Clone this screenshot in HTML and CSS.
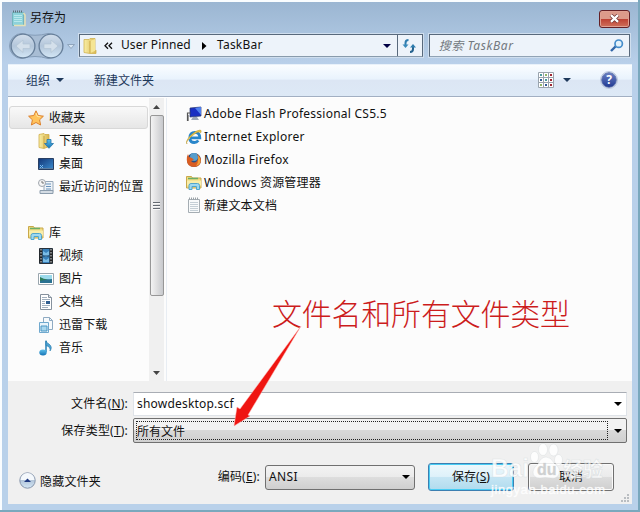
FILE: index.html
```html
<!DOCTYPE html>
<html lang="zh-CN">
<head>
<meta charset="utf-8">
<title>另存为</title>
<link rel="stylesheet" href="styles.css">
</head>
<body>
<svg width="0" height="0" class="defs">
  <defs>
    <linearGradient id="gold" x1="0" x2="1"><stop offset="0" stop-color="#f9eea4"/><stop offset="1" stop-color="#d8b650"/></linearGradient>
    <linearGradient id="orb" x1="0" x2="0" y1="0" y2="1"><stop offset="0" stop-color="#d3dfec"/><stop offset=".5" stop-color="#b3c6da"/><stop offset="1" stop-color="#d4e7f6"/></linearGradient>
    <linearGradient id="screen" x1="0" x2="1" y1="0" y2="1"><stop offset="0" stop-color="#123576"/><stop offset="1" stop-color="#3c8dd0"/></linearGradient>
    <linearGradient id="blue" x1="0" x2="0" y1="0" y2="1"><stop offset="0" stop-color="#5cc0ec"/><stop offset="1" stop-color="#1673b4"/></linearGradient>
    <symbol id="library" viewBox="0 0 16 16"><path d="M.5 1.500h5l1 1.500h8.500v10H.5z" fill="#f1dc82" stroke="#c9a94a"/><path d="M2 3.500h10" stroke="#6cae66" stroke-width="1.500"/><path d="M1 5.500h14v5H1z" fill="#f9eda9"/><path d="M3 14.500v-4q0-2 2-2h6.500q2 0 2 2v4h-3v-3h-4.500v3z" fill="#9ed8f0" stroke="#51a5cc"/></symbol>
    <symbol id="note" viewBox="0 0 14 17"><path d="M1.500 2.500h11v13h-11z" fill="#f8fafb" stroke="#a5adb3"/><path d="M3 5.500h8M3 7.500h8M3 9.500h8M3 11.500h8M3 13.500h8" stroke="#c5cfd6"/><path d="M2 1.500h10" stroke="#9aa1a6" stroke-width="2" stroke-dasharray="1 1"/></symbol>
  </defs>
</svg>
<main class="window">
  <header class="titlebar">
    <svg width="15" height="17" viewBox="0 0 15 17"><path d="M1.500 2.500h11v13h-11z" fill="#8dd2da" stroke="#74b4bd"/><path d="M12.500 3l1.500 2v10.500H3" fill="none" stroke="#e5e1b5" stroke-width="1.500"/><path d="M3 5.500h8M3 7.500h8M3 9.500h8M3 11.500h8" stroke="#b8e8ec"/><path d="M2 1.500h10" stroke="#5b7177" stroke-width="2" stroke-dasharray="1 1"/></svg>
    <h1>另存为</h1>
    <button class="close" aria-label="关闭"><svg width="11" height="9" viewBox="0 0 11 9"><path d="M2 1.200l7 6.600M9 1.200L2 7.800" stroke="#6c302e" stroke-width="3.800"/><path d="M2 1.200l7 6.600M9 1.200L2 7.800" stroke="#fff" stroke-width="2.300"/></svg></button>
  </header>
  <nav class="navbar">
    <svg class="history" width="67" height="28" viewBox="0 0 67 28"><path d="M13 1.500q13 3.500 26 0a12.500 12.500 0 0 1 0 25q-13-4-26 0a12.500 12.500 0 0 1 0-25z" fill="#a8bdd4" stroke="#859db8"/><circle cx="14" cy="14" r="11.900" fill="url(#orb)" stroke="#677f9a" stroke-width="1.300"/><circle cx="42" cy="14" r="11.900" fill="url(#orb)" stroke="#677f9a" stroke-width="1.300"/><path d="M7 14l7-6v4h7v4.500h-7v4z" fill="#d4e0eb" stroke="#b3c4d4" stroke-width=".7"/><path d="M49 14l-7-6v4h-7v4.500h7v4z" fill="#d4e0eb" stroke="#b3c4d4" stroke-width=".7"/><path d="M58.500 12.500h7l-3.500 4z" fill="#d6e5f3" stroke="#8fa5bd"/></svg>
    <div class="address">
      <svg width="14" height="18" viewBox="0 0 14 18"><path d="M1 2.500h5l1-1h5v11l1 1v3H7l-6-1z" fill="url(#gold)" stroke="#d1b252" stroke-width=".8"/><path d="M7 4l5-2v12l-5 2z" fill="#f5e594"/><path d="M7 4v12" stroke="#caa746"/></svg>
      <svg class="chev" width="9" height="8" viewBox="0 0 9 8"><path d="M4 .8L1 3.800l3 3M8 .8l-3 3 3 3" fill="none" stroke="#111" stroke-width="1.300"/></svg>
      <span class="crumb-one">User Pinned</span>
      <svg class="crumb-arrow" width="5" height="8" viewBox="0 0 5 8"><path d="M0 0l4.500 4L0 8z" fill="#000"/></svg>
      <span class="crumb-two">TaskBar</span>
      <i class="caret navy"></i>
      <span class="refresh"><svg width="15" height="14" viewBox="0 0 15 14"><path d="M6.500 1Q3.500 1 3.500 4v3" fill="none" stroke="#2f7cae" stroke-width="2"/><path d="M.5 5.500h6L3.500 9z" fill="#3a8abb"/><path d="M8 13q3 0 3-3V7" fill="none" stroke="#25628e" stroke-width="2"/><path d="M8 8.500h6L11 5z" fill="#2f7cae"/></svg></span>
    </div>
    <div class="search"><em>搜索 TaskBar</em><svg width="14" height="13" viewBox="0 0 14 13"><path d="M1 12l5-5" stroke="#3265a7" stroke-width="2.400"/><circle cx="8.700" cy="4.700" r="3.700" fill="#e2f1fb" stroke="#458dcb" stroke-width="1.700"/></svg></div>
  </nav>
  <div class="toolbar">
    <span>组织</span><i class="caret slate"></i><span class="new-folder">新建文件夹</span>
    <svg class="views" width="16" height="16" viewBox="0 0 16 16"><path d="M.5.5h15v15H.5zM5.500.5v15M10.500.5v15M.5 5.500h15M.5 10.500h15" fill="#fff" stroke="#9aa4ae"/><path d="M2 3h2M7 8h2" stroke="#4b9a9c" stroke-width="2"/><path d="M7 3h2M2 13h2" stroke="#8db467" stroke-width="2"/><path d="M12 3h2M12 8h2M12 13h2" stroke="#9e2632" stroke-width="2"/><path d="M2 8h2M7 13h2" stroke="#315a94" stroke-width="2"/></svg>
    <i class="caret slate view-caret"></i>
    <span class="help">?</span>
  </div>
  <section class="content">
    <aside class="sidebar">
      <ul>
        <li class="group selected"><svg width="16" height="16" viewBox="0 0 16 16"><path d="M8 .8l2.200 4.700 5.200.7-3.800 3.600 1 5.200L8 12.500 3.400 15l1-5.200L.6 6.200l5.200-.7z" fill="#ffc35c" stroke="#dd812c"/><path d="M8 3l1.300 3.500 3.200.4" fill="none" stroke="#ffe7a0"/></svg>收藏夹</li>
        <li><svg width="16" height="16" viewBox="0 0 16 16"><path d="M1 1.500l5-1 1 1h4v12l-5 2-5-1z" fill="url(#gold)" stroke="#cfac49" stroke-width=".8"/><path d="M6 3v12" stroke="#c9a443"/><path d="M9 6.500h4v4h2.500L11 15.300 6.500 10.500H9z" fill="url(#blue)" stroke="#2574a9" stroke-width=".8"/></svg>下载</li>
        <li><svg width="16" height="16" viewBox="0 0 16 16"><path d="M.5 2.500h15v11H.5z" fill="url(#screen)" stroke="#283f63"/><path d="M1 12.500h14" stroke="#5c7da0"/><path d="M2 9l3 3M5 9l-3 3" stroke="#77baf0"/></svg>桌面</li>
        <li><svg width="16" height="16" viewBox="0 0 16 16"><path d="M6 2.500h9v10H6z" fill="#eef3f8" stroke="#97a8b9"/><path d="M7 5h6M8 7.500h5M8 10h5" stroke="#6992ba"/><path d="M2 11.500h13v3H2z" fill="#d4dce4" stroke="#8c9dad"/><circle cx="4" cy="4" r="3.500" fill="#f6f6f6" stroke="#a0a6ad"/><path d="M4 2v2h2" fill="none" stroke="#777"/></svg>最近访问的位置</li>
        <li class="group libraries"><svg width="16" height="16"><use href="#library"/></svg>库</li>
        <li><svg width="16" height="16" viewBox="0 0 16 16"><path d="M1.500.5h13v15h-13z" fill="#367fba" stroke="#27313b"/><path d="M3 1v14M13 1v14" stroke="#222" stroke-width="3"/><path d="M3 1v14M13 1v14" stroke="#d9e1e8" stroke-dasharray="1.500 1.500"/><path d="M5 3l3 2 3-2v4l-3 2-3-2zM5 10l3 2 3-2v4H5z" fill="#7abce6"/><path d="M5 8h6" stroke="#1f4466"/></svg>视频</li>
        <li><svg width="16" height="16" viewBox="0 0 16 16"><path d="M.5 2.500h15v11H.5z" fill="#fff" stroke="#9aa6ae"/><path d="M2 4h12v8H2z" fill="#9cdaeb"/><path d="M2 7q5 2 12 1v4H2z" fill="#2a7292"/><path d="M2 6q5 3 9 2l-9 2z" fill="#2c7b59"/></svg>图片</li>
        <li><svg width="16" height="16" viewBox="0 0 16 16"><path d="M2.500.5h8l3 3v12h-11z" fill="#fff" stroke="#86919d"/><path d="M10.500.5v3h3" fill="#dbe3eb" stroke="#86919d"/><path d="M4 3.500h5M4 5.500h8M4 7.500h3M4 9.500h3M4 11.500h8M4 13.500h6" stroke="#a2b0be"/><path d="M8 7h4v3H8z" fill="#315f91"/></svg>文档</li>
        <li><svg width="16" height="16" viewBox="0 0 16 16"><path d="M5.500.5h6l3 3v9h-9z" fill="#f7fafc" stroke="#8eaac2"/><path d="M11.500.5v3h3" fill="none" stroke="#8eaac2"/><path d="M1.500 5.500h9v10h-9z" fill="#e8f4fb" stroke="#70a9ce"/><path d="M3 9h6v5H3z" fill="#a8d7ee" stroke="#4d96c3"/></svg>迅雷下载</li>
        <li><svg width="16" height="16" viewBox="0 0 16 16"><path d="M8 1v11" stroke="#2581b9" stroke-width="1.500"/><path d="M8 .5q0 2 3 3.500 4 3 1 7 1-4-4-5.500z" fill="#4da2d2" stroke="#2478ab" stroke-width=".6"/><ellipse cx="5" cy="12.500" rx="3.700" ry="3" fill="url(#blue)"/></svg>音乐</li>
      </ul>
      <div class="scrollbar"><svg width="7" height="4" viewBox="0 0 7 4"><path d="M0 4l3.500-4L7 4z" fill="#444"/></svg><div class="thumb"><i></i><i></i><i></i></div><svg class="down" width="7" height="4" viewBox="0 0 7 4"><path d="M0 0l3.500 4L7 0z" fill="#444"/></svg></div>
    </aside>
    <ul class="files">
      <li class="flash"><svg width="16" height="16" viewBox="0 0 16 16"><path d="M4 2l11-1v9L4 11z" fill="#1a2fc2" stroke="#27356d" stroke-width=".7"/><path d="M9 2l6-1v8z" fill="#4f80ee"/><path d="M7 11h4l2 3H5z" fill="#9da7b8"/><path d="M1.500 15V7h3M2 9v6" fill="none" stroke="#555" stroke-width="1.200"/></svg>Adobe Flash Professional CS5.5</li>
      <li class="ie"><svg width="16" height="16" viewBox="0 0 16 16"><path d="M3.800 10q.5 3.500 4.500 3.500 2.500 0 4-2M3.800 8.800h10q0-5.500-5-5.500-4.800 0-5 5.500" fill="none" stroke="#2986ca" stroke-width="2.800"/><path d="M1 15q-2-2 3-8Q10 1 14 1q2 0 .7 3Q13 1 6 7t-5 8z" fill="#ecc749" stroke="#b49431" stroke-width=".5"/></svg>Internet Explorer</li>
      <li class="fox"><svg width="16" height="16" viewBox="0 0 16 16"><circle cx="8" cy="8" r="7" fill="#294f82"/><circle cx="8" cy="5" r="4" fill="#579ecc"/><path d="M2 2l1 3 3 1 2 2-3 1q3 3 6 0 2-3 0-7 3 2 4 5 0 8-7 8Q1 15 .8 8 .8 4 2 2z" fill="#d95d22"/><path d="M12 3q6 8-2 11 3-4 2-11z" fill="#f3a137"/></svg>Mozilla Firefox</li>
      <li class="explorer"><svg width="16" height="16"><use href="#library"/></svg>Windows 资源管理器</li>
      <li class="cn"><svg width="16" height="17"><use href="#note"/></svg>新建文本文档</li>
    </ul>
  </section>
  <section class="form">
    <div class="field"><label>文件名(<u>N</u>):</label><div class="filename"><span>showdesktop.scf</span><i class="caret"></i></div></div>
    <div class="field type"><label>保存类型(<u>T</u>):</label><div class="filetype"><span>所有文件</span><i class="caret"></i></div></div>
    <footer class="actions">
      <svg width="17" height="17" viewBox="0 0 17 17"><circle cx="8.500" cy="8.500" r="7.700" fill="url(#orb)" stroke="#8795ab"/><path d="M1.500 8a7 7 0 0 1 14 0z" fill="#f4f8fc"/><path d="M5 10l3.500-3.500L12 10z" fill="#203a80"/></svg>
      <span class="hide">隐藏文件夹</span>
      <label>编码(<u>E</u>):</label>
      <div class="encoding">ANSI<i class="caret"></i></div>
      <button class="save">保存(<u>S</u>)</button>
      <button class="cancel">取消</button>
    </footer>
  </section>
  <svg class="grip" width="8" height="8" viewBox="0 0 8 8"><path d="M6 0h2v2H6zM3 3h2v2H3zM6 3h2v2H6zM0 6h2v2H0zM3 6h2v2H3zM6 6h2v2H6z" fill="#b9bdc1"/></svg>
</main>
<svg class="annotation" width="640" height="512" viewBox="0 0 640 512">
  <text x="272" y="325" class="callout" textLength="298">文件名和所有文件类型</text>
  <path d="M301 326L248 415l2 1-16 10 3-19 3 2z" fill="#ef1511" stroke="#ffb5b0" stroke-width=".5"/>
  <g class="watermark">
    <ellipse cx="534.500" cy="457" rx="4" ry="5.500"/><ellipse cx="543" cy="449.500" rx="4.500" ry="6"/><ellipse cx="553.500" cy="450" rx="4.500" ry="6"/><ellipse cx="558.500" cy="460" rx="4" ry="5.500"/><path d="M546 457q5 0 8 6 7 5 5 11-2 5-8 4-6-1-11 0-7 0-7-6 0-4 5-8 3-7 8-7z"/>
    <text x="491" y="477" class="brand" textLength="38" lengthAdjust="spacingAndGlyphs">Bai</text><text x="537" y="475" class="du">du</text><text x="563" y="477" class="exp" textLength="40">经验</text><text x="491" y="494" class="url" textLength="114">jingyan.baidu.com</text>
  </g>
</svg>
</body>
</html>
```
FILE: styles.css
```css
* { box-sizing: border-box; }
body { margin: 0; width: 640px; height: 512px; overflow: hidden; position: relative; background: #7aa8bd; font: 12px/16px "Noto Sans", "Noto Sans CJK SC", sans-serif; color: #111; }
.defs { position: absolute; }
svg { flex: none; }
ul { margin: 0; padding: 0; list-style: none; }
button { font: inherit; color: inherit; padding: 0; }
.window { width: 638px; height: 510px; display: flex; flex-direction: column; border-top: 2px solid #fafdff; border-left: 2px solid #fafdff; padding: 0 6px 6px; background: linear-gradient(#9bb6d2, #b9d0ea 62px, #b9d1ea); }
.titlebar { height: 29px; flex: none; display: flex; align-items: center; padding: 3px 2px 0 3px; }
h1 { margin: 0 0 0 4px; font-size: 12px; font-weight: 400; flex: 1; }
.close { width: 31px; height: 18px; margin-top: 1px; border: 1px solid #642026; border-radius: 3px; box-shadow: inset 0 0 0 1px #dfa092; background: linear-gradient(#dc9a8a 48%, #bd4032 50%, #cf715c); display: flex; align-items: center; justify-content: center; }
.navbar { height: 33px; flex: none; display: flex; align-items: flex-start; padding: 1px 2px 0 1px; }
.history { margin-top: 0; }
.address { height: 23px; width: 345px; margin: 2px 0 0 3px; border: 1px solid #58697c; border-bottom-color: #899bac; background: #edf3fa; display: flex; align-items: center; padding-left: 3px; outline: 1px solid #cfdeee; letter-spacing: .22px; }
.chev { margin-left: 7px; }
.crumb-one { margin-left: 8px; width: 70px; letter-spacing: .1px; white-space: nowrap; }
.crumb-one, .crumb-two { position: relative; top: -1px; }
.crumb-arrow { margin: 0 10px 0 11px; }
.caret { width: 0; height: 0; border: solid transparent; border-width: 4px 4px 0; border-top-color: #000; flex: none; }
.navy { margin-left: auto; border-top-color: #000044; }
.slate { border-top-color: #1e395b; }
.refresh { margin-left: 6px; width: 25px; height: 21px; border-left: 1px solid #58697c; display: flex; align-items: center; justify-content: center; }
.search { margin: 2px 0 0 6px; width: 202px; height: 23px; border: 1px solid #58697c; border-bottom-color: #91a3b5; outline: 1px solid #cfdeee; background: #edf3fa; padding: 0 5px 0 9px; display: flex; align-items: center; justify-content: space-between; color: #737980; letter-spacing: .6px; }
.toolbar { height: 33px; flex: none; display: flex; align-items: center; padding: 0 15px 1px 18px; color: #1e395b; background: linear-gradient(#fafdff, #e9f3fd 45%, #dce6f4 50%, #dde9f6); border-top: 1px solid #e8f1fa; border-bottom: 1px solid #a2afc2; }
.toolbar .slate { margin-left: 6px; }
.new-folder { margin-left: 30px; }
.toolbar > span:not(.help) { padding-top: 2px; }
.views { margin-left: auto; }
.toolbar .view-caret { margin: 0 30px 0 9px; }
.help { width: 16px; height: 16px; border-radius: 50%; border: 1px solid #7082b4; outline: 1px solid #bdc8de; background: linear-gradient(#687ec2, #233b93); color: #fff; font-weight: 700; line-height: 14px; text-align: center; }
.content { height: 284px; flex: none; display: flex; background: #fcfcfc; border-top: 1px solid #fff; }
.sidebar { width: 159px; display: flex; border-right: 1px solid #e8edf3; }
.sidebar ul { width: 141px; padding: 8px 0 0 1px; }
.sidebar li { height: 23px; display: flex; align-items: center; padding-left: 29px; gap: 5px; white-space: nowrap; letter-spacing: .1px; }
.sidebar .group { padding-left: 18px; }
.sidebar .selected { width: 139px; border: 1px solid #d8d8d8; border-radius: 3px; background: linear-gradient(#f9f9f9, #e6e6e6); }
.sidebar .libraries { margin-top: 23px; padding-left: 19px; }
.scrollbar { width: 15px; background: #f0f0f0; display: flex; flex-direction: column; align-items: center; padding-top: 7px; }
.thumb { width: 14px; height: 181px; margin-top: 6px; border: 1px solid #979797; border-radius: 2px; background: linear-gradient(90deg, #f3f3f3, #dfdfe0 48%, #c7c9cd); display: flex; flex-direction: column; align-items: center; justify-content: center; gap: 2px; }
.thumb i { width: 7px; height: 1px; background: #656b72; box-shadow: 0 1px #f8f8f8; }
.down { margin: auto 0 6px; }
.files { padding: 4px 0 0 19px; }
.files li { height: 23px; display: flex; align-items: center; gap: 2px; white-space: nowrap; }
.flash, .ie, .fox { letter-spacing: .25px; }
.explorer, .cn { letter-spacing: .2px; }
.form { flex: 1; background: #f0f0f0; padding: 10px 5px 0 8px; }
.field { display: flex; align-items: center; height: 26px; }
.field label { width: 112px; text-align: right; letter-spacing: .2px; }
.filename, .filetype { display: flex; align-items: center; margin-left: 5px; width: 494px; height: 24px; }
.filename { border: 1px solid #dfe3e8; border-top-color: #a9adb4; background: #fff; padding: 0 4px 0 3px; letter-spacing: .2px; justify-content: space-between; }
.type { height: 27px; }
.filetype { height: 25px; border: 1px solid #707070; border-radius: 2px; background: linear-gradient(#f2f2f2 48%, #d9d9d9 50%, #d0d0d0); padding: 2px 4px 2px 2px; justify-content: space-between; }
.filetype span { width: 472px; height: 19px; line-height: 19px; border: 1px dotted #222; }
.actions { display: flex; align-items: center; height: 40px; margin-top: 13px; padding: 0 0 0 3px; }
.actions > svg { margin-top: 7px; }
.hide { margin: 9px 0 0 4px; width: 174px; letter-spacing: .2px; }
.actions label { width: 46px; text-align: right; white-space: nowrap; letter-spacing: .2px; }
.encoding { flex: none; width: 150px; height: 25px; margin-left: 5px; border: 1px solid #707070; border-radius: 3px; background: linear-gradient(#f3f3f3, #ebebeb 48%, #dddddd 50%, #cfcfcf); display: flex; align-items: center; justify-content: space-between; padding: 0 4px 0 3px; letter-spacing: .4px; }
.save, .cancel { width: 86px; height: 28px; border-radius: 3px; flex: none; }
.save { margin-left: 13px; border: 1px solid #3c7fb1; box-shadow: inset 0 0 0 1px #48cdf4; background: linear-gradient(#edf8fc, #def1fa 48%, #c6e6f4 50%, #b0dbee); }
.cancel { margin-left: 14px; border: 1px solid #707070; box-shadow: inset 0 0 0 1px #fafafa; background: linear-gradient(#f3f3f3, #ebebeb 48%, #dddddd 50%, #cfcfcf); }
.grip { position: absolute; right: 11px; bottom: 10px; }
.annotation { position: absolute; left: 0; top: 0; pointer-events: none; }
.callout { font: 400 30px "Noto Sans CJK SC", sans-serif; font-weight: 300; fill: #cc1c1c; }
.watermark { fill: #fff; fill-opacity: .85; stroke: #c8d0d4; stroke-opacity: .5; stroke-width: .6; }
.brand { font: 700 25px "Liberation Sans", sans-serif; }
.du { font: 700 16px "Liberation Sans", sans-serif; fill: #c8c8c8; }
.exp { font: 700 20px "Noto Sans CJK SC", sans-serif; fill-opacity: .7; }
.url { font: 13px "Liberation Sans", sans-serif; stroke: #fff; }
```
